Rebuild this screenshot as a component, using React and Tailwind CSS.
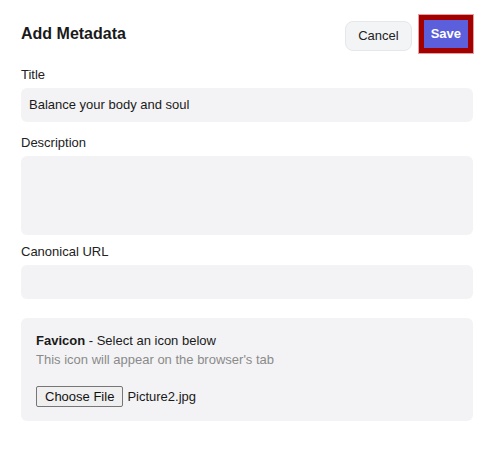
export default function App() {
    return <div className="w-[491px] h-[454px] bg-white pl-[21px] pr-[18px] pt-[15px] font-['Liberation_Sans',Arial,sans-serif] text-[#1a1a1a]">
        <div className="flex items-center justify-between h-[38px]">
            <h1 className="text-[16px] font-bold">Add Metadata</h1>
            <div className="flex items-center gap-[7px]">
                <button className="h-[30px] px-[12px] rounded-lg border border-gray-200 bg-gray-100 text-[13px] text-[#222] mt-[3px]">Cancel</button>
                <button className="h-[38px] border-[5px] border-[#a30000] outline outline-1 outline-[#e4a0a0] bg-[#5b5fdb] px-[7px] text-[13px] font-bold text-white">Save</button>
            </div>
        </div>

        <Field label="Title" className="mt-[13px]">
            <div className="h-[34px] rounded-md bg-[#f3f3f5] px-[8px] flex items-center text-[13px]">Balance your body and soul</div>
        </Field>
        <Field label="Description" className="mt-[12px]">
            <div className="h-[79px] rounded-md bg-[#f3f3f5]" />
        </Field>
        <Field label="Canonical URL" className="mt-[8px]">
            <div className="h-[34px] rounded-md bg-[#f3f3f5]" />
        </Field>

        <div className="mt-[19px] rounded-md bg-[#f3f3f5] px-[15px] pt-[13px] pb-[14px]">
            <div className="text-[13px] leading-[19px]"><span className="font-bold">Favicon</span> - Select an icon below</div>
            <div className="text-[13px] leading-[19px] text-[#8a8a8a]">This icon will appear on the browser's tab</div>
            <div className="mt-[17px] flex items-center text-[13px]">
                <span className="h-[21px] px-[8px] flex items-center border border-[#767676] rounded-[2px] bg-[#efefef] text-[#111]">Choose File</span>
                <span className="ml-[4px]">Picture2.jpg</span>
            </div>
        </div>
    </div>
}

function Field({ label, className, children }) {
    return <div className={className}>
        <div className="text-[13px] leading-[17px] mb-[5px] text-[#222]">{label}</div>
        {children}
    </div>
}
